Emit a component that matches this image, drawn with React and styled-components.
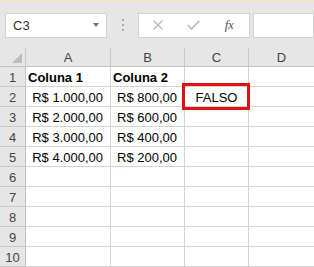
import React from "react";
import styled, { createGlobalStyle } from "styled-components";

const Global = createGlobalStyle`
  html, body { margin: 0; padding: 0; background: #ffffff; }
  body { font-family: "Liberation Sans", Arial, sans-serif; }
`;

const Page = styled.div`
  width: 314px;
  height: 267px;
  overflow: hidden;
  position: relative;
  background: #ffffff;
`;

const TopStripe = styled.div`
  height: 1px;
  background: #f2e7a6;
`;

const FormulaBar = styled.div`
  display: flex;
  align-items: center;
  height: 47px;
  padding: 0 0 0 5px;
  box-sizing: border-box;
  background: #e6e6e6;
`;

const Box = styled.div`
  display: flex;
  align-items: center;
  height: 25px;
  box-sizing: border-box;
  background: #ffffff;
  border: 1px solid #d2d2d2;
  width: ${(p) => p.$w}px;
  flex: ${(p) => (p.$grow ? "1 0 auto" : "0 0 auto")};
  margin-left: ${(p) => p.$ml || 0}px;
  margin-top: 1px;
`;

const NameText = styled.span`
  flex: 1;
  padding-left: 7px;
  font-size: 13px;
  color: #333;
`;

const Caret = styled.span`
  width: 0;
  height: 0;
  border-left: 3.5px solid transparent;
  border-right: 3.5px solid transparent;
  border-top: 4px solid #777;
  margin-right: 7px;
`;

const Dots = styled.div`
  display: flex;
  flex-direction: column;
  gap: 3px;
  margin-left: 15px;
`;

const Dot = styled.span`
  width: 2px;
  height: 2px;
  background: #a8a8a8;
`;

const IconSlot = styled.span`
  display: flex;
  align-items: center;
  justify-content: center;
  width: ${(p) => p.$w}px;
  color: ${(p) => p.$c};
`;

const Fx = styled.span`
  font-family: "Liberation Serif", "Times New Roman", serif;
  font-style: italic;
  font-size: 13px;
  color: #555;
  letter-spacing: -0.5px;
`;

const Sheet = styled.div`
  display: grid;
  grid-template-columns: 26px 85px 74px 64px 66px;
  grid-auto-rows: 20px;
  grid-template-rows: 19px;
  font-size: 13px;
`;

const HeadCell = styled.div`
  display: flex;
  align-items: center;
  justify-content: center;
  background: #e6e6e6;
  color: #444;
  box-sizing: border-box;
  border-right: 1px solid #c8c8c8;
  border-bottom: 1px solid #c0c0c0;
  position: relative;
  padding-top: 1px;
`;

const CornerTriangle = styled.span`
  position: absolute;
  right: 3px;
  bottom: 3px;
  width: 0;
  height: 0;
  border-left: 10px solid transparent;
  border-bottom: 10px solid #bdbdbd;
`;

const RowHead = styled.div`
  display: flex;
  align-items: center;
  justify-content: center;
  background: #e6e6e6;
  color: #444;
  box-sizing: border-box;
  border-right: 1px solid #c0c0c0;
  border-bottom: 1px solid #c8c8c8;
  padding-top: 1px;
`;

const Cell = styled.div`
  display: flex;
  align-items: center;
  justify-content: ${(p) =>
    p.$align === "right" ? "flex-end" : p.$align === "center" ? "center" : "flex-start"};
  box-sizing: border-box;
  border-right: 1px solid #d4d4d4;
  border-bottom: 1px solid #d4d4d4;
  padding: 1px ${(p) => (p.$align === "right" ? 7 : 2)}px 0 2px;
  color: #000;
  font-weight: ${(p) => (p.$bold ? 700 : 400)};
  white-space: nowrap;
`;

const Highlight = styled.div`
  position: absolute;
  left: 182px;
  top: 83px;
  width: 68px;
  height: 27px;
  box-sizing: border-box;
  border: 3px solid #e01010;
  pointer-events: none;
`;

const cols = ["A", "B", "C", "D"];
const data = {
  1: [{ t: "Coluna 1", bold: true }, { t: "Coluna 2", bold: true }, {}, {}],
  2: [{ t: "R$ 1.000,00", a: "right" }, { t: "R$ 800,00", a: "right" }, { t: "FALSO", a: "center" }, {}],
  3: [{ t: "R$ 2.000,00", a: "right" }, { t: "R$ 600,00", a: "right" }, {}, {}],
  4: [{ t: "R$ 3.000,00", a: "right" }, { t: "R$ 400,00", a: "right" }, {}, {}],
  5: [{ t: "R$ 4.000,00", a: "right" }, { t: "R$ 200,00", a: "right" }, {}, {}],
};

export default function App() {
  const rows = Array.from({ length: 10 }, (_, i) => i + 1);
  return (
    <Page>
      <Global />
      <TopStripe />
      <FormulaBar>
        <Box $w={102}>
          <NameText>C3</NameText>
          <Caret />
        </Box>
        <Dots>
          <Dot />
          <Dot />
          <Dot />
        </Dots>
        <Box $w={112} $ml={14}>
          <IconSlot $w={38} $c="#b4b4b4">
            <svg width="10" height="10" viewBox="0 0 10 10">
              <path d="M0.5 0.5 L9.5 9.5 M9.5 0.5 L0.5 9.5" stroke="currentColor" strokeWidth="1.2" fill="none" />
            </svg>
          </IconSlot>
          <IconSlot $w={32} $c="#b4b4b4">
            <svg width="13" height="10" viewBox="0 0 13 10">
              <path d="M0.7 5 L4.5 9 L12.3 0.7" stroke="currentColor" strokeWidth="1.5" fill="none" />
            </svg>
          </IconSlot>
          <IconSlot $w={40}>
            <Fx>fx</Fx>
          </IconSlot>
        </Box>
        <Box $grow $ml={3} />
      </FormulaBar>
      <Sheet>
        <HeadCell>
          <CornerTriangle />
        </HeadCell>
        {cols.map((c) => (
          <HeadCell key={c}>{c}</HeadCell>
        ))}
        {rows.map((r) => (
          <React.Fragment key={r}>
            <RowHead>{r}</RowHead>
            {cols.map((c, ci) => {
              const d = (data[r] && data[r][ci]) || {};
              return (
                <Cell key={c} $align={d.a} $bold={d.bold}>
                  {d.t || ""}
                </Cell>
              );
            })}
          </React.Fragment>
        ))}
      </Sheet>
      <Highlight />
    </Page>
  );
}
